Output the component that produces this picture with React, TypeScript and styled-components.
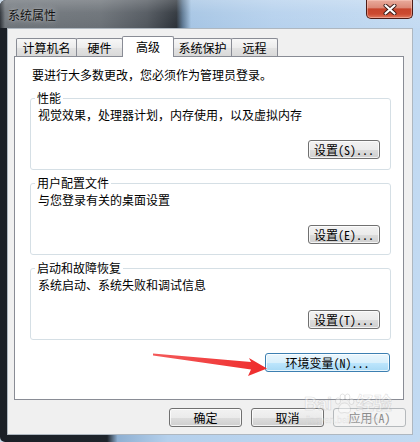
import React from 'react';
import styled, { createGlobalStyle } from 'styled-components';

const FONT = `"Noto Sans Mono CJK SC", "Noto Sans CJK SC", "Noto Sans CJK JP", sans-serif`;

const GlobalStyle = createGlobalStyle`
  html, body { margin: 0; padding: 0; background: #c9d9e8; }
  body { width: 420px; height: 442px; overflow: hidden; font-family: ${FONT}; }
  * { box-sizing: border-box; }
`;

const Window = styled.div`
  position: relative;
  width: 420px;
  height: 442px;
  display: flex;
  flex-direction: column;
  border-radius: 6px 6px 5px 5px;
  overflow: hidden;
  background: linear-gradient(to right, #1b2027 0%, #1e242b 25.5%, #8fb0d2 28%, #b5d0ec 40%, #c2daf2 100%);
  font-family: ${FONT};
  font-size: 12px;
  color: #000;
`;

const TitleBar = styled.div`
  height: 28px;
  flex: none;
  display: flex;
  align-items: flex-start;
  justify-content: space-between;
  background:
    linear-gradient(to bottom, rgba(255, 255, 255, 0.22) 0%, rgba(255, 255, 255, 0.06) 45%, rgba(255, 255, 255, 0) 100%),
    linear-gradient(to right, #2a2f35 0%, #6f757b 1.2%, #6a7076 24%, #50565d 35%, #2c3239 42%, #5d7893 43.5%, #a6c5e4 45.5%, #b6d1ed 65%, #c4dbf2 100%);
`;

const Title = styled.div`
  padding-left: 8px;
  line-height: 30px;
  font-size: 12px;
  color: #111;
  text-shadow: 0 0 6px rgba(255, 255, 255, 0.55), 0 0 2px rgba(255, 255, 255, 0.35);
`;

const CloseButton = styled.div`
  width: 47px;
  height: 19px;
  margin-right: 7px;
  border: 1px solid #4d1b15;
  border-top: none;
  border-radius: 0 0 5px 5px;
  background: linear-gradient(to bottom, #e9ab9c 0%, #dc8a78 42%, #c7452c 50%, #cc4a30 78%, #e07a5f 100%);
  box-shadow: inset 0 0 0 1px rgba(255, 210, 200, 0.45);
  display: flex;
  align-items: center;
  justify-content: center;
`;

const Client = styled.div`
  flex: 1;
  margin: 0 7px 7px;
  border: 1px solid #aeb7c0;
  background: #f0f0f0;
  padding: 7px 8px 0 6px;
  display: flex;
  flex-direction: column;
`;

const TabStrip = styled.div`
  height: 20px;
  display: flex;
  align-items: flex-end;
  padding-left: 2px;
  position: relative;
  z-index: 1;
`;

const Tab = styled.div<{ $w: number; $active?: boolean }>`
  width: ${(p) => p.$w}px;
  height: ${(p) => (p.$active ? 21 : 18)}px;
  margin-bottom: ${(p) => (p.$active ? -1 : 0)}px;
  position: relative;
  z-index: ${(p) => (p.$active ? 2 : 1)};
  border: 1px solid #898c95;
  border-bottom: none;
  border-radius: 2px 2px 0 0;
  background: ${(p) =>
    p.$active ? '#ffffff' : 'linear-gradient(to bottom, #f7f7f7 0%, #ececec 50%, #e3e3e3 51%, #d9d9d9 100%)'};
  display: flex;
  align-items: center;
  justify-content: center;
  line-height: 16px;
  padding-top: ${(p) => (p.$active ? 0 : 1)}px;
  & + & {
    margin-left: -1px;
  }
`;

const Panel = styled.div`
  width: 390px;
  height: 344px;
  border: 1px solid #898c95;
  background: #ffffff;
  padding: 10px 12px 0 15px;
  display: flex;
  flex-direction: column;
`;

const Intro = styled.div`
  line-height: 16px;
  margin-left: 2px;
`;

const Groups = styled.div`
  display: flex;
  flex-direction: column;
  gap: 5px;
  margin-top: 7px;
`;

const Group = styled.fieldset`
  margin: 0;
  min-width: 0;
  padding: 0 10px 10px 7px;
  border: 1px solid #d5dfe5;
  border-radius: 3px;
  display: flex;
  flex-direction: column;
`;

const Legend = styled.legend`
  padding: 0 2px;
  margin-left: -3px;
  line-height: 16px;
  font-size: 12px;
`;

const Desc = styled.div`
  line-height: 16px;
  margin-top: 1px;
`;

const ButtonRow = styled.div<{ $mt: number; $mr?: number; $gap?: number }>`
  display: flex;
  justify-content: flex-end;
  gap: ${(p) => p.$gap ?? 0}px;
  margin-top: ${(p) => p.$mt}px;
  margin-right: ${(p) => p.$mr ?? 0}px;
`;

type Variant = 'normal' | 'hot' | 'disabled';

const Button = styled.button<{ $w: number; $variant?: Variant }>`
  width: ${(p) => p.$w}px;
  height: 19px;
  padding: 0;
  margin: 0;
  font-family: ${FONT};
  font-size: 12px;
  line-height: 16px;
  border-radius: 3px;
  display: flex;
  align-items: center;
  justify-content: center;
  border: 1px solid
    ${(p) => (p.$variant === 'hot' ? '#3c7fb1' : p.$variant === 'disabled' ? '#b5b9bc' : '#707070')};
  color: ${(p) => (p.$variant === 'disabled' ? '#8b8b8b' : '#000')};
  background: ${(p) =>
    p.$variant === 'hot'
      ? 'linear-gradient(to bottom, #eaf6fd 0%, #d9f0fc 50%, #bee6fd 51%, #a7d9f5 100%)'
      : p.$variant === 'disabled'
      ? '#f4f4f4'
      : 'linear-gradient(to bottom, #f2f2f2 0%, #ebebeb 50%, #dddddd 51%, #cfcfcf 100%)'};
  box-shadow: inset 0 0 0 1px
    ${(p) => (p.$variant === 'disabled' ? 'rgba(255,255,255,0)' : 'rgba(255,255,255,0.75)')};
`;

const Overlay = styled.svg`
  position: absolute;
  left: 0;
  top: 0;
  pointer-events: none;
  z-index: 5;
`;

const Watermark = styled.div`
  position: absolute;
  left: 304px;
  top: 393px;
  pointer-events: none;
  z-index: 6;
  display: flex;
  flex-direction: column;
  align-items: flex-start;
  opacity: 0.5;
`;

const WmLine = styled.div`
  display: flex;
  align-items: center;
  gap: 1px;
`;

const WmBig = styled.span`
  font-family: "Liberation Sans", "Noto Sans CJK SC", sans-serif;
  font-weight: bold;
  font-size: 18px;
  line-height: 22px;
  color: rgba(255, 255, 255, 0.75);
  -webkit-text-stroke: 0.6px rgba(150, 150, 150, 0.6);
`;

const WmSmall = styled.div`
  font-family: "Liberation Sans", sans-serif;
  font-size: 9px;
  line-height: 10px;
  color: rgba(255, 255, 255, 0.8);
  -webkit-text-stroke: 0.3px rgba(150, 150, 150, 0.5);
  margin-left: 2px;
`;

const groups = [
  { title: '性能', desc: '视觉效果，处理器计划，内存使用，以及虚拟内存', btn: '设置(S)...' },
  { title: '用户配置文件', desc: '与您登录有关的桌面设置', btn: '设置(E)...' },
  { title: '启动和故障恢复', desc: '系统启动、系统失败和调试信息', btn: '设置(T)...' },
];

const tabs = [
  { label: '计算机名', w: 61 },
  { label: '硬件', w: 47 },
  { label: '高级', w: 52, active: true },
  { label: '系统保护', w: 59 },
  { label: '远程', w: 47 },
];

export default function App() {
  return (
    <>
      <GlobalStyle />
      <Window>
        <TitleBar>
          <Title>系统属性</Title>
          <CloseButton>
            <svg width="14" height="11" viewBox="0 0 14 11">
              <path d="M2.5 1.5 L11.5 9.5 M11.5 1.5 L2.5 9.5" stroke="#3a1a16" strokeWidth="4" strokeLinecap="round" />
              <path d="M2.5 1.5 L11.5 9.5 M11.5 1.5 L2.5 9.5" stroke="#ffffff" strokeWidth="2.2" strokeLinecap="round" />
            </svg>
          </CloseButton>
        </TitleBar>
        <Client>
          <TabStrip>
            {tabs.map((t) => (
              <Tab key={t.label} $w={t.w} $active={t.active}>
                {t.label}
              </Tab>
            ))}
          </TabStrip>
          <Panel>
            <Intro>要进行大多数更改，您必须作为管理员登录。</Intro>
            <Groups>
              {groups.map((g) => (
                <Group key={g.title}>
                  <Legend>{g.title}</Legend>
                  <Desc>{g.desc}</Desc>
                  <ButtonRow $mt={17}>
                    <Button $w={72}>{g.btn}</Button>
                  </ButtonRow>
                </Group>
              ))}
            </Groups>
            <ButtonRow $mt={13} $mr={1}>
              <Button $w={125} $variant="hot">
                环境变量(N)...
              </Button>
            </ButtonRow>
          </Panel>
          <ButtonRow $mt={8} $mr={-2} $gap={9}>
            <Button $w={73}>确定</Button>
            <Button $w={73}>取消</Button>
            <Button $w={73} $variant="disabled">
              应用(A)
            </Button>
          </ButtonRow>
        </Client>
        <Overlay width="420" height="442" viewBox="0 0 420 442">
          <defs>
            <linearGradient id="arrowFill" x1="0" y1="0" x2="1" y2="0">
              <stop offset="0" stopColor="#f45a5a" />
              <stop offset="1" stopColor="#ee2b2b" />
            </linearGradient>
          </defs>
          <polygon
            points="153,353.5 251,362 249,358 267,368.5 248,376 251,369.5 153,355.5"
            fill="url(#arrowFill)"
          />
        </Overlay>
        <Watermark>
          <WmLine>
            <WmBig>Bai</WmBig>
            <svg width="22" height="22" viewBox="0 0 22 22">
              <g fill="rgba(255,255,255,0.75)" stroke="rgba(150,150,150,0.6)" strokeWidth="0.8">
                <ellipse cx="5" cy="8" rx="2.5" ry="3.2" />
                <ellipse cx="9.5" cy="4" rx="2.4" ry="3" />
                <ellipse cx="14.5" cy="4" rx="2.4" ry="3" />
                <ellipse cx="18.5" cy="8.5" rx="2.4" ry="3" />
                <path d="M11.5 10 C6.5 10 4.5 16 6 18.5 C7.5 21 10 19.5 11.5 19.5 C13 19.5 15.5 21 17 18.5 C18.5 16 16.5 10 11.5 10 Z" />
              </g>
            </svg>
            <WmBig>经验</WmBig>
          </WmLine>
          <WmSmall>jingyan.baidu.com</WmSmall>
        </Watermark>
      </Window>
    </>
  );
}
